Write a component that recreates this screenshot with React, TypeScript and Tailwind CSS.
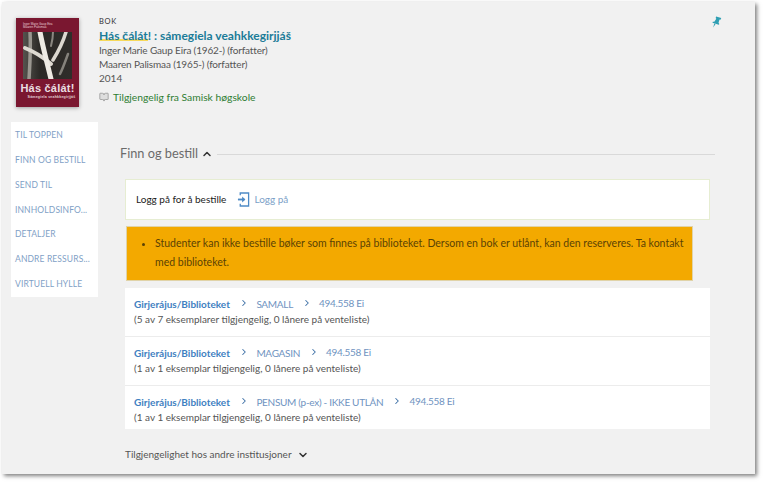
import React from "react";
import { ChevronRight, ChevronUp, ChevronDown, BookOpen } from "lucide-react";

const font = "font-['Lato','Open_Sans',sans-serif]";
const navItems = ["TIL TOPPEN", "FINN OG BESTILL", "SEND TIL", "INNHOLDSINFO...", "DETALJER", "ANDRE RESSURS...", "VIRTUELL HYLLE"];
const rows = [
  { loc: "SAMALL", note: "(5 av 7 eksemplarer tilgjengelig, 0 lånere på venteliste)" },
  { loc: "MAGASIN", note: "(1 av 1 eksemplar tilgjengelig, 0 lånere på venteliste)" },
  { loc: "PENSUM (p-ex) - IKKE UTLÅN", note: "(1 av 1 eksemplar tilgjengelig, 0 lånere på venteliste)" },
];

function Cover() {
  return (
    <div className="w-[63px] h-[89px] bg-[#7a1730] shrink-0 flex flex-col shadow-[0_1px_4px_rgba(0,0,0,0.35)]">
      <div className="h-[14px] pl-[7px] pt-[5px] flex flex-col font-['Liberation_Sans',sans-serif] text-[3px] leading-[3px] text-[#e6cfd5] whitespace-nowrap">
        <span>Inger Marie Gaup Eira</span>
        <span>Maaren Palismaa</span>
      </div>
      <svg viewBox="0 0 49 47" className="w-[49px] h-[47px] block ml-[7px]">
        <defs>
          <linearGradient id="bg" x1="0" y1="0" x2="1" y2="0">
            <stop offset="0" stopColor="#55534e" />
            <stop offset="0.35" stopColor="#2b2926" />
            <stop offset="1" stopColor="#2f2d2a" />
          </linearGradient>
          <filter id="soft"><feGaussianBlur stdDeviation="0.45" /></filter>
        </defs>
        <rect width="49" height="47" fill="url(#bg)" />
        <g fill="none" strokeLinecap="round" filter="url(#soft)">
          <path d="M7 0 C8 16 7 30 6 47" strokeWidth="3.5" stroke="#9a9790" />
          <path d="M45 22 C42 30 40 36 37 42" strokeWidth="2.5" stroke="#85827b" />
          <path d="M30 0 C30 6 29 10 28 14" strokeWidth="2" stroke="#8a8780" />
          <path d="M2 16 C12 20 20 25 28 32" strokeWidth="4" stroke="#dedad2" />
          <path d="M17 0 C20 16 24 30 28 47" strokeWidth="5" stroke="#eeebe4" />
          <path d="M43 0 C40 10 35 20 30 28" strokeWidth="3.5" stroke="#dcd8d0" />
        </g>
      </svg>
      <div className="flex-1 flex flex-col items-center pt-[3px]">
        <span className="font-['Liberation_Sans',sans-serif] font-bold text-[11px] leading-[13px] tracking-[0.02em] text-[#eadfe2] whitespace-nowrap">Hás čálát!</span>
        <span className="ml-[8px] font-['Liberation_Sans',sans-serif] font-bold text-[3.6px] leading-[5px] tracking-[0.05em] text-[#e2cfd4] whitespace-nowrap">Sámegiela veahkkegirjjáš</span>
      </div>
    </div>
  );
}

function LoginIcon() {
  return (
    <svg viewBox="0 0 14 16" className="w-[13px] h-[15px]" fill="none" stroke="#4d8ac6" strokeWidth="1.4">
      <path d="M3.5 3.5 V1 H12.5 V15 H3.5 V12.5" />
      <path d="M1 8 H8" strokeWidth="2" />
      <path d="M5.5 4.8 L9 8 L5.5 11.2 Z" fill="#4d8ac6" stroke="none" />
    </svg>
  );
}

function Pin() {
  return (
    <svg viewBox="0 0 12 13" className="w-[11px] h-[12px]" fill="#2f9fb3">
      <path d="M5.6 0.4 L11.2 2.2 L10.4 4 L9.3 3.8 L8.2 7.4 L9.1 8.6 L8.5 9.6 L1.6 7.4 L2 6.2 L3.6 6.2 L5.8 3 L5.1 2.2 Z" />
      <path d="M3.6 8.2 L5 8.7 L2.4 12.6 Z" />
    </svg>
  );
}

export default function App() {
  return (
    <div className={`w-[764px] h-[483px] bg-white pl-[2px] pt-[2px] overflow-hidden ${font}`}>
      <div className="relative w-[753px] h-[472px] bg-[#f1f1f1] shadow-[2px_2px_4px_rgba(0,0,0,0.5)] flex flex-col">
        <div className="absolute right-[33px] top-[14px]"><Pin /></div>

        <div className="flex pl-[14px] pt-[16px] h-[120px] shrink-0">
          <Cover />
          <div className="ml-[20px] flex flex-col">
            <div className="text-[7.5px] leading-[10px] mt-[-1px] tracking-[0.09em] text-[#333]">BOK</div>
            <div className="text-[12px] leading-[15px] mt-[1px] font-bold text-[#1b7c98] whitespace-nowrap">
              <span className="bg-[linear-gradient(transparent_72%,#f7d95a_72%,#f7d95a_90%,transparent_90%)]">Hás čálát</span>! : sámegiela veahkkegirjjáš
            </div>
            <div className="text-[10px] leading-[14px] tracking-[-0.15px] text-[#555] whitespace-nowrap">Inger Marie Gaup Eira (1962-) (forfatter)</div>
            <div className="text-[10px] leading-[14px] tracking-[-0.15px] text-[#555] whitespace-nowrap">Maaren Palismaa (1965-) (forfatter)</div>
            <div className="text-[10px] leading-[14px] text-[#555]">2014</div>
            <div className="flex items-center mt-[5px] text-[10.3px] leading-[14px] text-[#2e7d32] whitespace-nowrap">
              <BookOpen className="w-[10px] h-[10px] text-[#999] mr-[4px]" strokeWidth={2} fill="#dedede" />
              Tilgjengelig fra Samisk høgskole
            </div>
          </div>
        </div>

        <div className="flex pl-[9px] flex-1">
          <nav className="w-[87px] h-[175px] bg-white flex flex-col pt-[1px] shrink-0">
            {navItems.map((t) => (
              <div key={t} className="h-[25px] px-[4px] flex items-center">
                <span className="block whitespace-nowrap text-[8.5px] tracking-[0.015em] text-[#7f9fc6]">{t}</span>
              </div>
            ))}
          </nav>

          <main className="ml-[22px] w-[595px] flex flex-col">
            <div className="flex items-center h-[16px] mt-[24px]">
              <span className="text-[12.75px] text-[#6b6b6b] whitespace-nowrap">Finn og bestill</span>
              <ChevronUp className="w-[12px] h-[12px] text-[#333] ml-[3px]" strokeWidth={3} />
              <div className="flex-1 h-px bg-[#d9d9d9] ml-[4px]" />
            </div>

            <div className="ml-[5px] w-[585px] flex flex-col mt-[17px]">
              <div className="h-[41px] bg-white border border-[#e6edd2] flex items-center pl-[10px]">
                <span className="text-[10px] text-[#222] whitespace-nowrap">Logg på for å bestille</span>
                <span className="ml-[11px]"><LoginIcon /></span>
                <span className="ml-[4px] text-[10px] text-[#7c9fc8]">Logg på</span>
              </div>

              <div className="ml-px mt-[6px] w-[567px] h-[55px] bg-[#f3a900] border border-[#e0d3a8] pl-[28px] pr-[4px] pt-[7px]">
                <ul className="list-disc text-[10.5px] leading-[19px] text-[#5a4205]">
                  <li>Studenter kan ikke bestille bøker som finnes på biblioteket. Dersom en bok er utlånt, kan den reserveres. Ta kontakt med biblioteket.</li>
                </ul>
              </div>

              <div className="mt-[7px] bg-white flex flex-col">
                {rows.map((r, i) => (
                  <div key={r.loc} className={`pl-[9px] flex flex-col ${i < 2 ? "h-[49px] border-b border-[#ececec]" : "h-[43px]"}`}>
                    <div className="flex items-center h-[16px] mt-[8px] whitespace-nowrap text-[10px]">
                      <span className="font-bold text-[#3f7fc1]">Girjerájus/Biblioteket</span>
                      <ChevronRight className="w-[10px] h-[10px] text-[#3b6ea5] ml-[9px] mr-[7.5px] mb-[2px]" strokeWidth={2.5} />
                      <span className="text-[#6f93bf] tracking-[-0.3px]">{r.loc}</span>
                      <ChevronRight className="w-[10px] h-[10px] text-[#3b6ea5] ml-[9px] mr-[7px] mb-[2px]" strokeWidth={2.5} />
                      <span className="text-[#6f93bf] tracking-[-0.3px] mb-[2px]">494.558 Ei</span>
                    </div>
                    <div className="text-[10px] leading-[15px] text-[#555] whitespace-nowrap">{r.note}</div>
                  </div>
                ))}
              </div>

              <div className="flex items-center mt-[18px] text-[10px] text-[#555] whitespace-nowrap">
                Tilgjengelighet hos andre institusjoner
                <ChevronDown className="w-[12px] h-[12px] text-[#333] ml-[5px]" strokeWidth={3} />
              </div>
            </div>
          </main>
        </div>
      </div>
    </div>
  );
}
